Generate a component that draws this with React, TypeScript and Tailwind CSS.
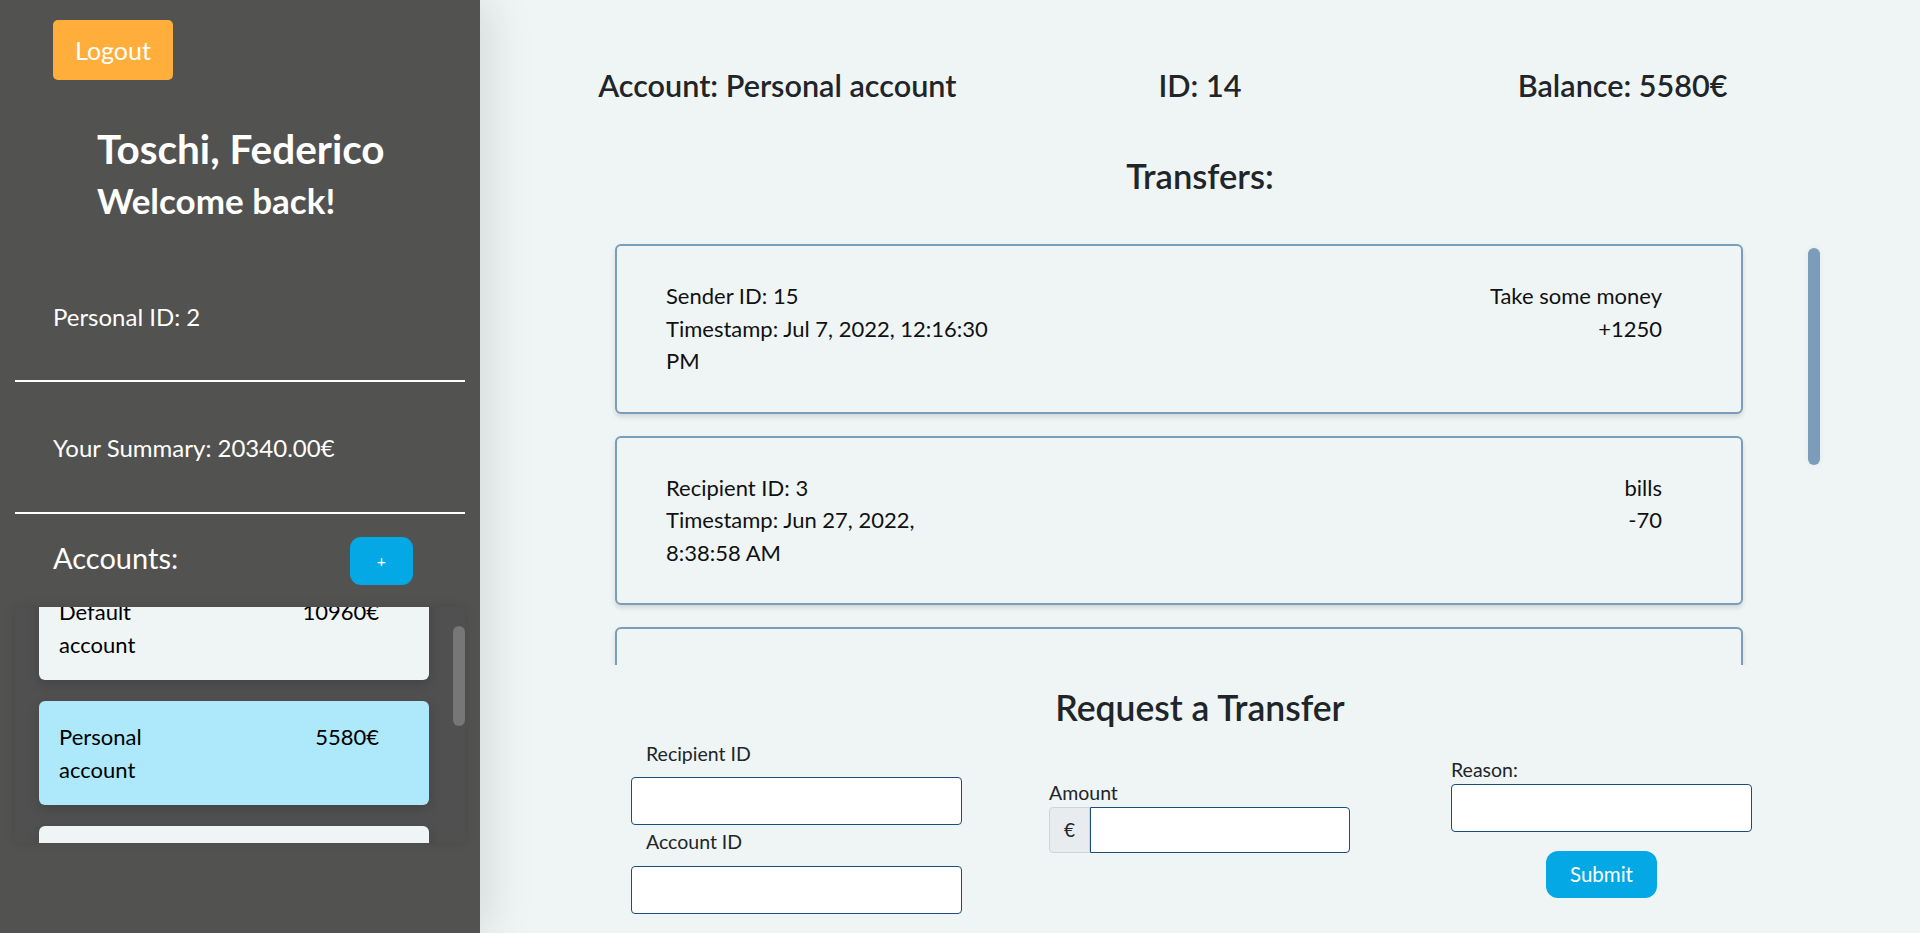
import { useEffect, useRef } from "react";

const accounts = [
  { name: "Default account", balance: 10960, active: false },
  { name: "Personal account", balance: 5580, active: true },
  { name: "Savings account", balance: 3000, active: false },
  { name: "Travel account", balance: 800, active: false },
];

const transfers = [
  { who: "Sender ID", id: 15, ts: "Jul 7, 2022, 12:16:30 PM", reason: "Take some money", amount: "+1250" },
  { who: "Recipient ID", id: 3, ts: "Jun 27, 2022, 8:38:58 AM", reason: "bills", amount: "-70" },
  { who: "Recipient ID", id: 7, ts: "Jun 21, 2022, 5:02:11 PM", reason: "rent", amount: "-450" },
  { who: "Sender ID", id: 9, ts: "Jun 14, 2022, 10:45:03 AM", reason: "refund", amount: "+200" },
];

const Sidebar = () => {
  const listRef = useRef<HTMLDivElement>(null);

  useEffect(() => {
    if (listRef.current) listRef.current.scrollTop = 45;
  }, []);

  return (
    <aside className="relative z-10 w-[480px] shrink-0 h-full bg-[#525250] text-white flex flex-col shadow-[6px_0_45px_rgba(0,0,0,0.13)]">
      <button className="mt-[20px] ml-[53px] w-[120px] h-[60px] rounded-[5px] bg-[#ffae3c] text-[25px] text-white leading-none">
        Logout
      </button>

      <div className="ml-[97px] mt-[45px]">
        <h2 className="text-[40.5px] font-bold leading-[1.2]">Toschi, Federico</h2>
        <h3 className="mt-[5px] text-[35px] font-bold leading-[1.2]">Welcome back!</h3>
      </div>

      <p className="ml-[53px] mt-[78px] text-[24px] leading-[1.5]">Personal ID: 2</p>
      <hr className="mx-[15px] mt-[45px] border-0 h-[2px] bg-white" />
      <p className="ml-[53px] mt-[48px] text-[24px] leading-[1.5]">Your Summary: 20340.00€</p>
      <hr className="mx-[15px] mt-[46px] border-0 h-[2px] bg-white" />

      <div className="mt-[22px] ml-[53px] mr-[67px] flex items-start justify-between">
        <span className="text-[29px] leading-[1.5]">Accounts:</span>
        <button className="mt-[1px] w-[63px] h-[48px] rounded-[11px] bg-[#03a8e5] text-white text-[16px]">+</button>
      </div>

      <div className="relative mt-[22px] mx-[15px] h-[236px] bg-[#505050] shadow-[0_0_10px_rgba(0,0,0,0.1)]">
        <div ref={listRef} className="h-full overflow-y-scroll pl-[24px] pr-[36px] pt-[14px] pb-[43px]">
          {accounts.map((a) => (
            <div
              key={a.name}
              className={`mb-[21px] rounded-[6px] pl-[20px] pr-[50px] py-[19px] flex justify-between text-[22px] leading-[33px] text-black shadow-[0_4px_12px_rgba(0,0,0,0.16)] ${
                a.active ? "bg-[#ade8fb]" : "bg-[#eff4f5]"
              }`}
            >
              <span className="w-[130px]">{a.name}</span>
              <span>{a.balance}€</span>
            </div>
          ))}
        </div>
        {/* scrollbar thumb */}
        <div className="absolute right-0 top-[19px] w-[12px] h-[100px] rounded-full bg-[#777777]" />
      </div>
    </aside>
  );
};

const TransferCard = ({ t }: { t: (typeof transfers)[number] }) => (
  <div className="mb-[22px] w-[1128px] rounded-[6px] border-2 border-[#7b9cbb] bg-[#eff5f5] pl-[49px] pr-[79px] py-[34px] flex justify-between text-[22px] leading-[32.5px] text-[#111] shadow-[0_3px_5px_rgba(0,0,0,0.12)]">
    <div className="w-[323px]">
      <div>
        {t.who}: {t.id}
      </div>
      <div>Timestamp: {t.ts}</div>
    </div>
    <div className="text-right">
      <div>{t.reason}</div>
      <div>{t.amount}</div>
    </div>
  </div>
);

const inputCls = "block h-[48px] rounded-[4px] border border-[#1d4d78] bg-white px-3 outline-none";

export default function App() {
  return (
    <div className="flex h-[933px] w-full overflow-hidden font-['Lato',sans-serif] text-[#212529]">
      <Sidebar />

      <main className="flex-1 h-full bg-[#eff5f5] flex flex-col">
        <div className="mx-auto mt-[68px] w-[1268px] grid grid-cols-3 text-center text-[30.6px] font-semibold leading-[1.2]">
          <span>Account: Personal account</span>
          <span>ID: 14</span>
          <span>Balance: 5580€</span>
        </div>

        <h3 className="mt-[50px] text-center text-[34.5px] font-semibold leading-[1.2]">Transfers:</h3>

        <div className="relative ml-[100px] mt-[31px] w-[1240px] h-[438px] shrink-0">
          <div className="h-full overflow-y-scroll pl-[35px] pr-[65px] pt-[17px] pb-[57px]">
            {transfers.map((t, i) => (
              <TransferCard key={i} t={t} />
            ))}
          </div>
          {/* scrollbar thumb */}
          <div className="absolute right-0 top-[21px] w-[12px] h-[217px] rounded-full bg-[#7b9cbb] shadow-[0_0_6px_rgba(0,0,0,0.06)]" />
        </div>

        <h3 className="mt-[22px] text-center text-[35.5px] font-semibold leading-[1.2]">Request a Transfer</h3>

        <form className="mx-auto mt-[9px] w-[1206px] grid grid-cols-3 items-center text-[19.5px] leading-[1.5]">
          <div>
            <label className="block ml-[49px] mb-[9px]">Recipient ID</label>
            <input type="text" className={`${inputCls} ml-[34px] w-[331px]`} />
            <label className="block ml-[49px] mt-[2px] mb-[10px]">Account ID</label>
            <input type="text" className={`${inputCls} ml-[34px] w-[331px] h-[45px]`} />
          </div>

          <div className="ml-[50px] mb-[22px]">
            <label className="block">Amount</label>
            <div className="flex w-[301px] h-[46px]">
              <span className="w-[41px] flex items-center justify-center rounded-l-[4px] border border-[#ced4da] bg-[#e9ecef] text-[19px]">
                €
              </span>
              <input type="text" className="flex-1 min-w-0 rounded-r-[4px] border border-[#1d4d78] bg-white px-3 outline-none" />
            </div>
          </div>

          <div className="ml-[50px] w-[301px] flex flex-col">
            <label className="block">Reason:</label>
            <input type="text" className={`${inputCls} w-[301px]`} />
            <button
              type="button"
              className="mt-[19px] self-center w-[111px] h-[47px] rounded-[12px] bg-[#03a8e5] text-white text-[20.5px]"
            >
              Submit
            </button>
          </div>
        </form>
      </main>
    </div>
  );
}
